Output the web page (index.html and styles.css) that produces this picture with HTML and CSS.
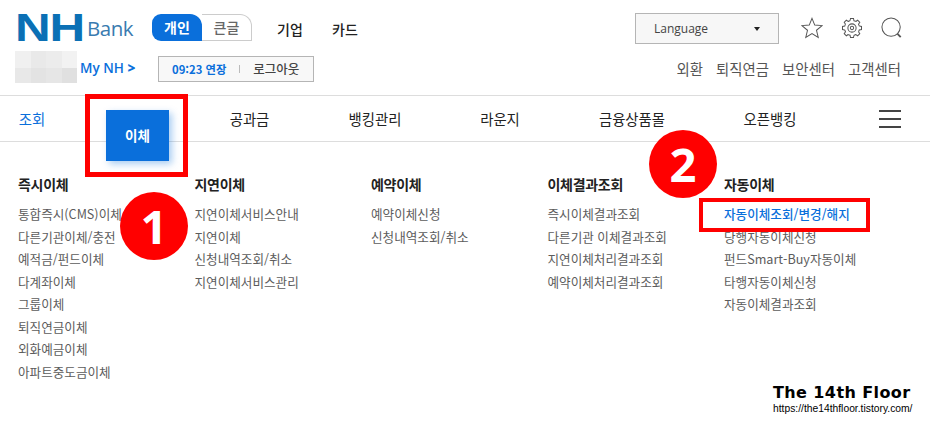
FILE: index.html
```html
<!doctype html>
<html lang="ko">
	<head>
		<meta charset="utf-8">
		<title>NH Bank</title>
		<link rel="stylesheet" href="styles.css">
	</head>
	<body>
		<header class="top">
			<div class="row-one">
				<div class="logo"><span class="logo-nh">NH</span><span class="logo-bank">Bank</span></div>
				<div class="switch">
					<span class="switch-on">개인</span>
					<span class="switch-off">큰글</span>
				</div>
				<a class="top-link">기업</a>
				<a class="top-link">카드</a>
				<div class="language"><span>Language</span><i class="caret"></i></div>
				<div class="icons">
					<svg width="22" height="22" viewBox="0 0 24 24" fill="none" stroke="#555" stroke-width="1.100">
						<path d="M12 1.500l3 7.300 8 .6-6.100 5.100 1.900 7.800-6.800-4.200-6.800 4.200 1.900-7.800L1 9.400l8-.6z"/>
					</svg>
					<svg width="22" height="22" viewBox="0 0 24 24" fill="none" stroke="#555" stroke-width="1.100">
						<defs>
							<path id="tooth" d="M9.880 4.080L10.360 1.630H13.640L14.120 4.080A8.200 8.200 0 0 1 16.100 4.900"/>
						</defs>
						<use href="#tooth"/>
						<use href="#tooth" transform="rotate(45 12 12)"/>
						<use href="#tooth" transform="rotate(90 12 12)"/>
						<use href="#tooth" transform="rotate(135 12 12)"/>
						<use href="#tooth" transform="rotate(180 12 12)"/>
						<use href="#tooth" transform="rotate(225 12 12)"/>
						<use href="#tooth" transform="rotate(270 12 12)"/>
						<use href="#tooth" transform="rotate(315 12 12)"/>
						<circle cx="12" cy="12" r="4.500"/>
						<circle cx="12" cy="12" r="1.800"/>
					</svg>
					<svg width="22" height="22" viewBox="0 0 24 24" fill="none" stroke="#555" stroke-width="1.100">
						<circle cx="11" cy="11" r="10"/>
						<path d="M18 18.500l3.500 3.500" stroke-width="2"/>
					</svg>
				</div>
			</div>
			<div class="row-two">
				<div class="blur-name">
					<i></i><i></i><i></i><i></i>
					<i></i><i></i><i></i><i></i>
				</div>
				<a class="my-nh">My NH <b>&gt;</b></a>
				<div class="session">
					<span class="session-time">09:23 연장</span>
					<i class="session-bar"></i>
					<span class="session-out">로그아웃</span>
				</div>
				<nav class="util">
					<a>외환</a>
					<a>퇴직연금</a>
					<a>보안센터</a>
					<a>고객센터</a>
				</nav>
			</div>
		</header>

		<nav class="gnb">
			<a class="gnb-item gnb-first">조회</a>
			<a class="gnb-item gnb-active"><span>이체</span></a>
			<a class="gnb-item gnb-bill">공과금</a>
			<a class="gnb-item gnb-manage">뱅킹관리</a>
			<a class="gnb-item gnb-lounge">라운지</a>
			<a class="gnb-item gnb-mall">금융상품몰</a>
			<a class="gnb-item gnb-open">오픈뱅킹</a>
			<div class="burger"><i></i><i></i><i></i></div>
		</nav>

		<main class="menu">
			<section class="menu-col">
				<h2>즉시이체</h2>
				<ul>
					<li>통합즉시(CMS)이체</li>
					<li>다른기관이체/충전</li>
					<li>예적금/펀드이체</li>
					<li>다계좌이체</li>
					<li>그룹이체</li>
					<li>퇴직연금이체</li>
					<li>외화예금이체</li>
					<li>아파트중도금이체</li>
				</ul>
			</section>
			<section class="menu-col">
				<h2>지연이체</h2>
				<ul>
					<li>지연이체서비스안내</li>
					<li>지연이체</li>
					<li>신청내역조회/취소</li>
					<li>지연이체서비스관리</li>
				</ul>
			</section>
			<section class="menu-col">
				<h2>예약이체</h2>
				<ul>
					<li>예약이체신청</li>
					<li>신청내역조회/취소</li>
				</ul>
			</section>
			<section class="menu-col">
				<h2>이체결과조회</h2>
				<ul>
					<li>즉시이체결과조회</li>
					<li>다른기관 이체결과조회</li>
					<li>지연이체처리결과조회</li>
					<li>예약이체처리결과조회</li>
				</ul>
			</section>
			<section class="menu-col">
				<h2>자동이체</h2>
				<ul>
					<li class="menu-on">자동이체조회/변경/해지</li>
					<li>당행자동이체신청</li>
					<li>펀드Smart-Buy자동이체</li>
					<li>타행자동이체신청</li>
					<li>자동이체결과조회</li>
				</ul>
			</section>
		</main>

		<!-- annotations over the screenshot -->
		<div class="mark mark-box-one"></div>
		<div class="mark mark-box-two"></div>
		<div class="mark mark-num mark-num-one">1</div>
		<div class="mark mark-num mark-num-two">2</div>
		<div class="mark stamp">
			<strong>The 14th Floor</strong>
			<span>https://the14thfloor.tistory.com/</span>
		</div>
	</body>
</html>
```

FILE: styles.css
```css
html, body {
	margin: 0;
	width: 100%;
	height: 100%;
}

body {
	position: relative;
	height: 424px;
	overflow: hidden;
	background-color: #fff;
	font-family: "Noto Sans CJK KR", "Noto Sans", sans-serif;
	color: #222;
}

a {
	text-decoration: none;
}

.top {
	height: 95px;
	padding: 14px 27px 0 15px;
	box-sizing: border-box;
}

.row-one {
	display: flex;
	align-items: flex-start;
	height: 30px;
}

.logo {
	display: flex;
	align-items: center;
	width: 137px;
	height: 28px;
	margin-top: 0;
}

.logo-nh {
	font-family: "Liberation Sans", sans-serif;
	font-weight: 700;
	font-size: 38px;
	line-height: 28px;
	letter-spacing: -1px;
	color: #0b70b5;
	transform: scaleX(1.300);
	transform-origin: left center;
	width: 72px;
}

.logo-bank {
	font-family: "Open Sans", sans-serif;
	font-size: 20.500px;
	line-height: 28px;
	color: #3a7bb0;
	letter-spacing: -0.5px;
}

.switch {
	display: flex;
	width: 100px;
	height: 27px;
	font-size: 14px;
	font-weight: 700;
	line-height: 26px;
	text-align: center;
}

.switch-on {
	width: 50px;
	background-color: #0a6fdb;
	color: #fff;
	border-radius: 9px 12px 0 9px;
}

.switch-off {
	width: 50px;
	color: #666;
	font-weight: 500;
	box-sizing: border-box;
	height: 27px;
	border-top: 1px solid #ccc;
	border-bottom: 1px solid #ccc;
	border-right: 1px solid #ccc;
	border-radius: 0 12px 0 0;
	line-height: 25px;
}

.top-link {
	font-size: 14px;
	font-weight: 500;
	line-height: 30px;
	margin-left: 25px;
	color: #222;
	width: 30px;
}

.language {
	display: flex;
	justify-content: space-between;
	align-items: center;
	box-sizing: border-box;
	width: 144px;
	height: 31px;
	margin-top: -1px;
	margin-left: auto;
	margin-right: 22px;
	padding: 0 18px 0 18px;
	border: 1px solid #b5b5b5;
	background-color: #f7f7f7;
	font-family: "Open Sans", sans-serif;
	font-size: 12px;
	color: #444;
}

.caret {
	width: 0;
	height: 0;
	border-left: 3.500px solid transparent;
	border-right: 3.500px solid transparent;
	border-top: 4px solid #222;
}

.icons {
	display: flex;
	gap: 18px;
	margin-top: 3px;
}

.row-two {
	display: flex;
	align-items: center;
	height: 32px;
	margin-top: 7px;
}

.blur-name {
	display: grid;
	grid-template-columns: repeat(4, 1fr);
	grid-template-rows: 17px 15px;
	width: 62px;
	height: 32px;
}

.blur-name i:nth-child(1) { background-color: #f0f0f0; }
.blur-name i:nth-child(2) { background-color: #e9e9e9; }
.blur-name i:nth-child(3) { background-color: #ececec; }
.blur-name i:nth-child(4) { background-color: #f2f2f2; }
.blur-name i:nth-child(5) { background-color: #e8e8e8; }
.blur-name i:nth-child(6) { background-color: #e3e3e3; }
.blur-name i:nth-child(7) { background-color: #e6e6e6; }
.blur-name i:nth-child(8) { background-color: #e0e0e0; }

.my-nh {
	margin: 2px 0 0 3px;
	font-family: "Open Sans", sans-serif;
	font-size: 13.500px;
	font-weight: 600;
	color: #0a6fdb;
	width: 78px;
}

.session {
	display: flex;
	align-items: center;
	box-sizing: border-box;
	width: 156px;
	height: 26px;
	margin-top: 3px;
	border: 1px solid #b5b5b5;
	background-color: #f8f8f8;
	font-size: 11.300px;
	font-weight: 700;
}

.session-time {
	margin-left: 13px;
	color: #0a6fdb;
}

.session-bar {
	width: 1px;
	height: 8px;
	margin: 0 13px;
	background-color: #bbb;
}

.session-out {
	color: #444;
	font-weight: 500;
	font-size: 12.500px;
}

.util {
	display: flex;
	gap: 13px;
	margin: 2px 2px 0 auto;
	font-size: 14.400px;
	color: #555;
}

.gnb {
	display: flex;
	align-items: center;
	height: 47px;
	box-sizing: border-box;
	border-top: 1px solid #ddd;
	border-bottom: 1px solid #ddd;
	font-size: 14.400px;
	color: #222;
}

.gnb-item {
	text-align: center;
}

.gnb-first {
	width: 64px;
	color: #0a6fdb;
}

.gnb-active {
	position: relative;
	width: 141px;
	height: 45px;
}

/* the box hangs below the bar */
.gnb-active span {
	position: absolute;
	left: 42px;
	top: 14px;
	width: 63px;
	height: 51px;
	line-height: 50px;
	background-color: #0a6fdb;
	color: #fff;
	font-size: 13.500px;
	font-weight: 700;
	box-shadow: 3px 3px 7px rgba(10, 111, 219, 0.35);
}

.gnb-bill {
	width: 89px;
}

.gnb-manage {
	width: 162px;
}

.gnb-lounge {
	width: 88px;
}

.gnb-mall {
	width: 176px;
}

.gnb-open {
	width: 100px;
}

.burger {
	display: flex;
	flex-direction: column;
	gap: 6px;
	width: 22px;
	margin-left: 59px;
}

.burger i {
	height: 2px;
	background-color: #444;
}

.menu {
	display: flex;
	padding: 33px 0 0 18px;
}

.menu-col {
	width: 176.500px;
}

.menu-col h2 {
	margin: 0 0 9px;
	font-size: 14px;
	line-height: 19px;
	font-weight: 700;
	letter-spacing: -0.3px;
	color: #222;
}

.menu-col ul {
	margin: 0;
	padding: 0;
	list-style: none;
}

.menu-col li {
	height: 22.500px;
	font-size: 12.600px;
	line-height: 22px;
	color: #5c5c5c;
	white-space: nowrap;
}

.menu-col .menu-on {
	color: #0a6fdb;
	font-weight: 500;
}

.mark {
	position: absolute;
}

.mark-box-one {
	left: 85px;
	top: 94px;
	width: 93px;
	height: 73px;
	border: 5px solid #f00;
}

.mark-box-two {
	left: 699px;
	top: 198px;
	width: 163px;
	height: 26px;
	border: 4px solid #f00;
}

.mark-num {
	width: 68px;
	height: 68px;
	border-radius: 50%;
	background-color: #f00;
	color: #fff;
	font-family: "Open Sans", sans-serif;
	font-weight: 700;
	font-size: 47px;
	line-height: 68px;
	text-align: center;
}

.mark-num-one {
	left: 120px;
	top: 192px;
}

.mark-num-two {
	left: 649px;
	top: 130px;
}

.stamp {
	left: 773px;
	top: 383px;
	display: flex;
	flex-direction: column;
	color: #000;
}

.stamp strong {
	font-family: "DejaVu Sans", sans-serif;
	font-size: 16px;
	line-height: 20px;
	font-weight: 700;
	letter-spacing: 0.4px;
	white-space: nowrap;
}

.stamp span {
	font-family: "Liberation Sans", sans-serif;
	font-size: 10.300px;
	line-height: 12px;
	white-space: nowrap;
}
```
